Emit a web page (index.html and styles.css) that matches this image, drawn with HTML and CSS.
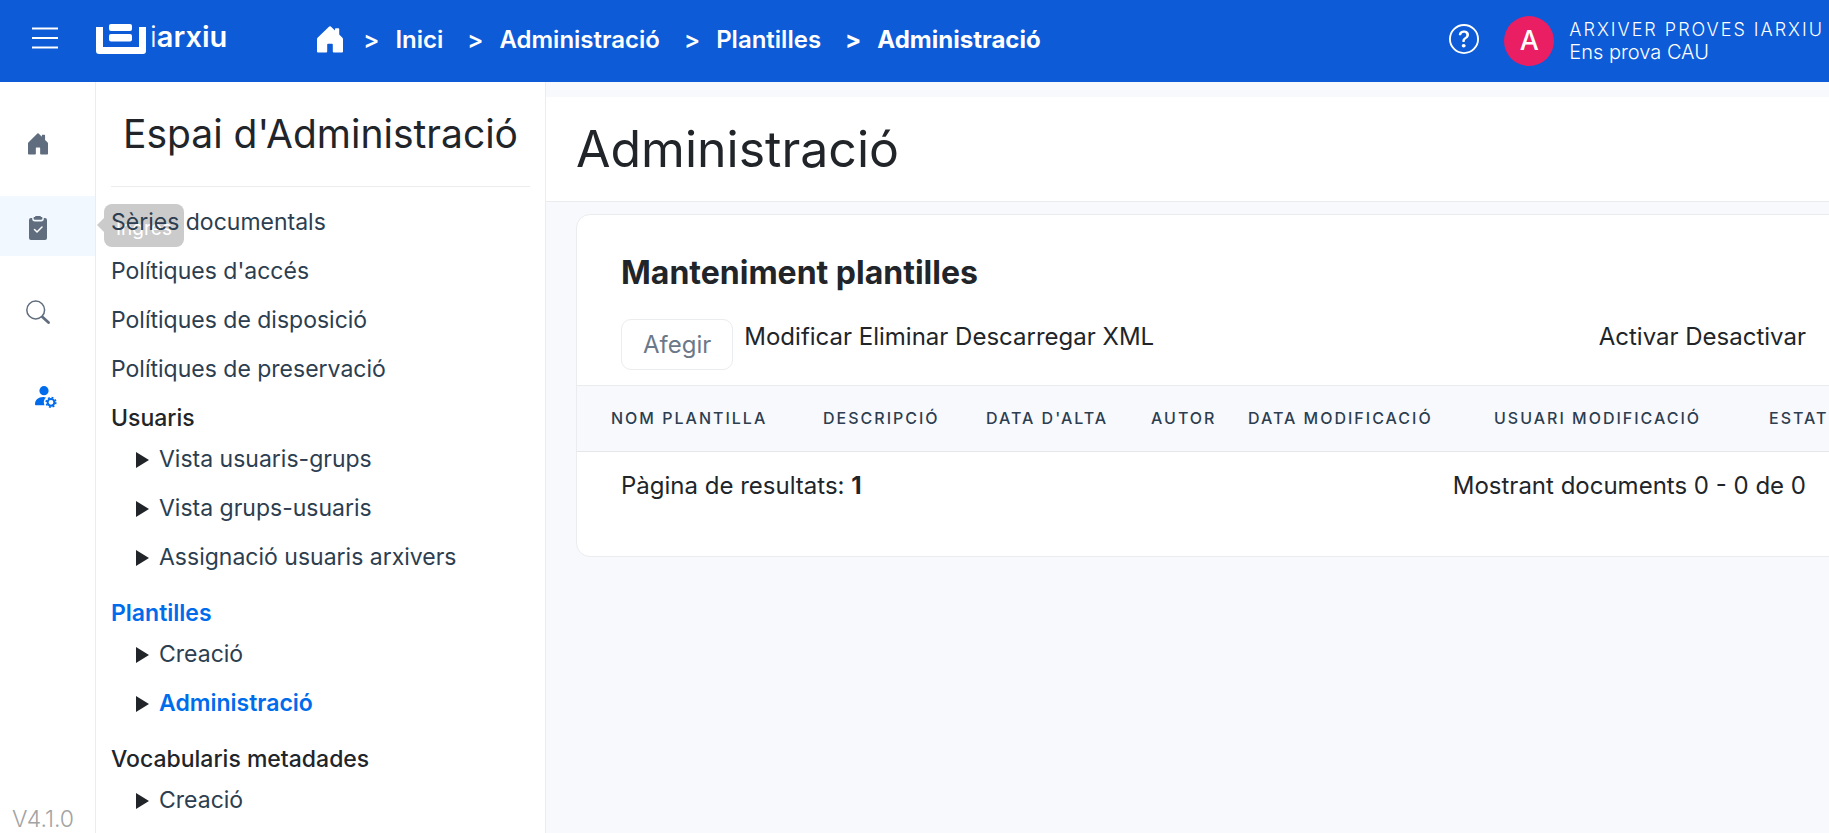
FILE: index.html
```html
<!DOCTYPE html>
<html lang="ca">
<head>
<meta charset="utf-8">
<title>iArxiu - Administració</title>
<link rel="stylesheet" href="styles.css">
</head>
<body>
<svg class="sprite" aria-hidden="true">
  <symbol id="house" viewBox="0 0 26 27">
    <path d="M12.2.6a1.2 1.2 0 0 1 1.6 0L18 4.6V3a.8.8 0 0 1 .8-.8h2.600a.8.8 0 0 1 .8.8v5.500l3 3a2 2 0 0 1 .8 1.500v12.500a1 1 0 0 1-1 1h-8.200a1 1 0 0 1-1-1V18.500a.8.8 0 0 0-.8-.8h-4a.8.8 0 0 0-.8.8v7a1 1 0 0 1-1 1H1a1 1 0 0 1-1-1V13a2 2 0 0 1 .8-1.500z"/>
  </symbol>
</svg>
<header class="topbar">
  <button class="icon-button menu-button" aria-label="Menú">
    <svg width="26" height="24" viewBox="0 0 26 24"><path d="M0 2.500h26M0 12h26M0 21.500h26" stroke="currentColor" stroke-width="2"/></svg>
  </button>
  <a class="brand" href="#">
    <svg width="50" height="30" viewBox="0 0 50 30" fill="currentColor">
      <path d="M0 3h7v20h36V3h7v24a3 3 0 0 1-3 3H3a3 3 0 0 1-3-3z"/>
      <rect x="13" y="0" width="23" height="7" rx="2"/>
      <rect x="13" y="10" width="23" height="7.500" rx="2"/>
    </svg>
    <span class="brand-name"><span class="brand-light">i</span>arxiu</span>
  </a>
  <nav class="crumbs" aria-label="Camí">
    <a class="crumb-home" href="#" aria-label="Inici"><svg width="26" height="27"><use href="#house"/></svg></a>
    <span class="crumb">&gt;</span><a class="crumb" href="#">Inici</a>
    <span class="crumb">&gt;</span><a class="crumb" href="#">Administració</a>
    <span class="crumb">&gt;</span><a class="crumb" href="#">Plantilles</a>
    <span class="crumb current">&gt;</span><a class="crumb current" href="#">Administració</a>
  </nav>
  <div class="account">
    <button class="icon-button" aria-label="Ajuda">
      <svg width="30" height="30" viewBox="0 0 16 16" fill="currentColor"><path d="M8 15A7 7 0 1 1 8 1a7 7 0 0 1 0 14m0 1A8 8 0 1 0 8 0a8 8 0 0 0 0 16"/><path d="M5.255 5.786a.237.237 0 0 0 .241.247h.825c.138 0 .248-.113.266-.25.09-.656.54-1.134 1.342-1.134.686 0 1.314.343 1.314 1.168 0 .635-.374.927-.965 1.371-.673.489-1.206 1.060-1.168 1.987l.003.217a.25.25 0 0 0 .25.246h.811a.25.25 0 0 0 .25-.25v-.105c0-.718.273-.927 1.010-1.486.609-.463 1.244-.977 1.244-2.056 0-1.511-1.276-2.241-2.673-2.241-1.267 0-2.655.590-2.750 2.286m1.557 5.763c0 .533.425.927 1.010.927.609 0 1.028-.394 1.028-.927 0-.552-.420-.940-1.029-.940-.584 0-1.009.388-1.009.940"/></svg>
    </button>
    <span class="avatar">A</span>
    <div class="who">
      <span class="who-name">ARXIVER PROVES IARXIU</span>
      <span class="who-org">Ens prova CAU</span>
    </div>
  </div>
</header>
<div class="layout">
  <nav class="rail" aria-label="Espais">
    <a class="rail-item" href="#" aria-label="Inici"><svg width="20" height="22" viewBox="0 0 26 27" preserveAspectRatio="none" fill="currentColor"><use href="#house" width="26" height="27"/></svg></a>
    <a class="rail-item hovered" href="#" aria-label="Ingrés">
      <svg width="18" height="24" viewBox="0 0 18 24" fill="currentColor"><path d="M2 2h1.200v.8A2.700 2.700 0 0 0 5.900 5.500h6.200a2.700 2.700 0 0 0 2.700-2.700V2H16a2 2 0 0 1 2 2v18a2 2 0 0 1-2 2H2a2 2 0 0 1-2-2V4a2 2 0 0 1 2-2z"/><path d="M7 0h4a1 1 0 0 1 1 .9h.8a.6.6 0 0 1 .6.600V2.500a1.300 1.300 0 0 1-1.300 1.300H5.900A1.300 1.300 0 0 1 4.600 2.500V1.500a.6.600 0 0 1 .6-.6H6A1 1 0 0 1 7 0z"/><path d="M5.500 13.500 8 16l5-5" fill="none" stroke="#fff" stroke-width="1.500" stroke-linecap="round"/></svg>
      <span class="tooltip">Ingrés</span>
    </a>
    <a class="rail-item" href="#" aria-label="Cerca"><svg width="24" height="24" viewBox="0 0 24 24" fill="none" stroke="currentColor"><circle cx="9.700" cy="10" r="8.900" stroke-width="1.500"/><path d="m16.500 17 6 5.500" stroke-width="2.800" stroke-linecap="round"/></svg></a>
    <a class="rail-item active" href="#" aria-label="Administració"><svg width="22" height="22" viewBox="0 0 22 22" fill="currentColor"><circle cx="9" cy="4.700" r="4.600"/><path d="M9.500 11.200c-5.500-.6-9.500 2.400-9.500 7.100 0 .6.500 1 1 1h8.500a7 7 0 0 1 1.500-7.900z"/><circle cx="16" cy="16.300" r="3.400" fill="none" stroke="currentColor" stroke-width="2"/><circle cx="16" cy="16.300" r="4.800" fill="none" stroke="currentColor" stroke-width="1.600" stroke-dasharray="1.900 1.870"/></svg></a>
    <span class="version">V4.1.0</span>
  </nav>
  <aside class="sidebar">
    <h2 class="sidebar-title">Espai d'Administració</h2>
    <ul class="nav-list">
      <li><a href="#">Sèries documentals</a></li>
      <li><a href="#">Polítiques d'accés</a></li>
      <li><a href="#">Polítiques de disposició</a></li>
      <li><a href="#">Polítiques de preservació</a></li>
      <li class="group"><span class="group-title">Usuaris</span>
        <ul class="sub-list">
          <li><a href="#">Vista usuaris-grups</a></li>
          <li><a href="#">Vista grups-usuaris</a></li>
          <li><a href="#">Assignació usuaris arxivers</a></li>
        </ul>
      </li>
      <li class="group"><span class="group-title selected">Plantilles</span>
        <ul class="sub-list">
          <li><a href="#">Creació</a></li>
          <li><a class="selected" href="#">Administració</a></li>
        </ul>
      </li>
      <li class="group"><span class="group-title">Vocabularis metadades</span>
        <ul class="sub-list">
          <li><a href="#">Creació</a></li>
        </ul>
      </li>
    </ul>
  </aside>
  <main class="content">
    <div class="page-head"><h1>Administració</h1></div>
    <section class="card">
      <h3 class="card-title">Manteniment plantilles</h3>
      <div class="toolbar">
        <button class="add-button">Afegir</button>
        <span class="actions">Modificar Eliminar Descarregar XML</span>
        <span class="actions actions-end">Activar Desactivar</span>
      </div>
      <table class="grid">
        <colgroup><col class="c-name"><col class="c-desc"><col class="c-date"><col class="c-author"><col class="c-mod"><col class="c-user"><col></colgroup>
        <thead><tr><th>Nom plantilla</th><th>Descripció</th><th>Data d'alta</th><th>Autor</th><th>Data modificació</th><th>Usuari modificació</th><th>Estat</th></tr></thead>
      </table>
      <div class="card-foot">
        <span>Pàgina de resultats: <b>1</b></span>
        <span>Mostrant documents 0 - 0 de 0</span>
      </div>
    </section>
  </main>
</div>
</body>
</html>
```
FILE: styles.css
```css
* { box-sizing: border-box; }

body {
  margin: 0;
  height: 100vh;
  display: flex;
  flex-direction: column;
  overflow: hidden;
  background: #fff;
  color: #212529;
  font-family: Inter, "Open Sans", sans-serif;
  font-size: 24px;
  line-height: 33px;
}

a { color: inherit; text-decoration: none; }
ul { list-style: none; margin: 0; padding: 0; }
h1, h2, h3 { margin: 0; font-weight: 400; }
svg { display: block; }
.sprite { position: absolute; width: 0; height: 0; }

/* Top bar */
.topbar {
  flex: none;
  height: 82px;
  display: flex;
  align-items: center;
  padding: 0 0 0 32px;
  background: #0d5bd7;
  color: #fff;
  white-space: nowrap;
}
.icon-button { border: 0; padding: 0; background: none; color: inherit; }
.menu-button { margin: 0 38px 6px 0; }
.brand { display: flex; align-items: center; gap: 4px; margin-bottom: 4px; }
.brand-name { font-size: 29px; font-weight: 600; margin-bottom: 6px; }
.brand-light { font-weight: 300; }
.crumbs { display: flex; align-items: center; margin: 0 0 3px 90px; }
.crumb-home { margin-right: 20px; }
.crumb-home svg { fill: currentColor; }
.crumb { font-weight: 600; }
span.crumb { margin-right: 16px; }
a.crumb { margin-right: 24px; }
.crumb.current { font-weight: 700; }
.account { display: flex; align-items: center; margin-left: auto; padding-right: 5px; }
.account .icon-button { margin-bottom: 4px; }
.avatar {
  width: 50px;
  height: 50px;
  margin: 0 15px 0 25px;
  border-radius: 50%;
  background: #e91e63;
  font-size: 27px;
  font-weight: 500;
  line-height: 50px;
  text-align: center;
}
.who { display: flex; flex-direction: column; font-weight: 300; line-height: 23px; }
.who-name { font-size: 18px; letter-spacing: 2px; }
.who-org { font-size: 20px; }

/* Icon rail */
.layout { flex: 1; min-height: 0; display: flex; }
.rail {
  flex: none;
  width: 96px;
  display: flex;
  flex-direction: column;
  gap: 24px;
  padding-top: 30px;
  border-right: 1px solid #ebecee;
  color: #5f6d7e;
}
.rail-item {
  position: relative;
  flex: none;
  height: 60px;
  display: flex;
  align-items: center;
  justify-content: center;
  padding: 4px 19px 0 0;
}
.rail-item.hovered { background: #f1f8ff; }
.rail-item.active { color: #006cec; padding: 6px 4px 0 0; }
.tooltip {
  position: absolute;
  left: 104px;
  top: 8px;
  height: 43px;
  padding: 3px 12px 0;
  border-radius: 8px;
  background: #cbcbcb;
  color: #fff;
  font-size: 19px;
  line-height: 43px;
}
.tooltip::before {
  content: "";
  position: absolute;
  right: 100%;
  top: 14px;
  border: 7px solid transparent;
  border-left-width: 0;
  border-right-color: #cbcbcb;
}
.version { margin-top: auto; padding: 0 0 0 12px; color: #a3a3a3; font-size: 23px; font-weight: 300; line-height: 28px; }

/* Administration menu */
.sidebar {
  flex: none;
  width: 450px;
  padding: 28px 15px 0;
  border-right: 1px solid #ebecee;
  overflow: hidden;
  white-space: nowrap;
}
.sidebar-title {
  padding-bottom: 28px;
  border-bottom: 1px solid #ebecee;
  font-size: 39px;
  line-height: 48px;
  text-align: center;
}
.nav-list { position: relative; z-index: 1; padding-top: 19px; font-size: 23px; }
.nav-list li { margin-bottom: 16px; color: #2c3e50; }
.nav-list .group { margin-bottom: 23px; }
.group-title { display: block; margin-bottom: 8px; color: #212529; font-weight: 500; }
.sub-list { padding-left: 25px; }
.sub-list li { display: flex; align-items: center; gap: 10px; }
.sub-list li::before {
  content: "";
  border: 8px solid transparent;
  border-left: 13px solid #212529;
  border-right: 0;
}
.nav-list .selected { color: #006cec; font-weight: 600; }

/* Content */
.content { flex: 1; min-width: 0; padding-top: 15px; background: #f8f9fd; overflow: hidden; white-space: nowrap; }
.page-head { padding: 24px 30px; border-bottom: 1px solid #ebecee; background: #fff; }
.page-head h1 { font-size: 50px; line-height: 56px; }
.card {
  margin: 12px -40px 0 30px;
  padding-top: 38px;
  border: 1px solid #ebecee;
  border-radius: 14px;
  background: #fff;
}
.card-title { padding-left: 44px; font-size: 32px; font-weight: 700; line-height: 40px; }
.toolbar { display: flex; align-items: flex-start; padding: 26px 62px 15px 44px; }
.add-button {
  height: 51px;
  margin-right: 11px;
  padding: 0 21px;
  border: 1px solid #ebecee;
  border-radius: 10px;
  background: #fff;
  color: #6b7888;
  font: inherit;
}
.actions { line-height: 36px; }
.actions-end { margin-left: auto; }
.grid { width: 100%; table-layout: fixed; border-collapse: collapse; }
.grid th {
  height: 66px;
  padding: 0;
  border-top: 1px solid #ebecee;
  border-bottom: 1px solid #e4e6ea;
  background: #f8f9fd;
  color: #2c3e50;
  font-size: 16px;
  font-weight: 500;
  letter-spacing: 2px;
  text-align: left;
  text-transform: uppercase;
}
.grid th:first-child { padding-left: 34px; }
.c-name { width: 246px; }
.c-desc { width: 163px; }
.c-date { width: 165px; }
.c-author { width: 97px; }
.c-mod { width: 246px; }
.c-user { width: 275px; }
.card-foot { display: flex; justify-content: space-between; padding: 17px 62px 54px 44px; }
```
